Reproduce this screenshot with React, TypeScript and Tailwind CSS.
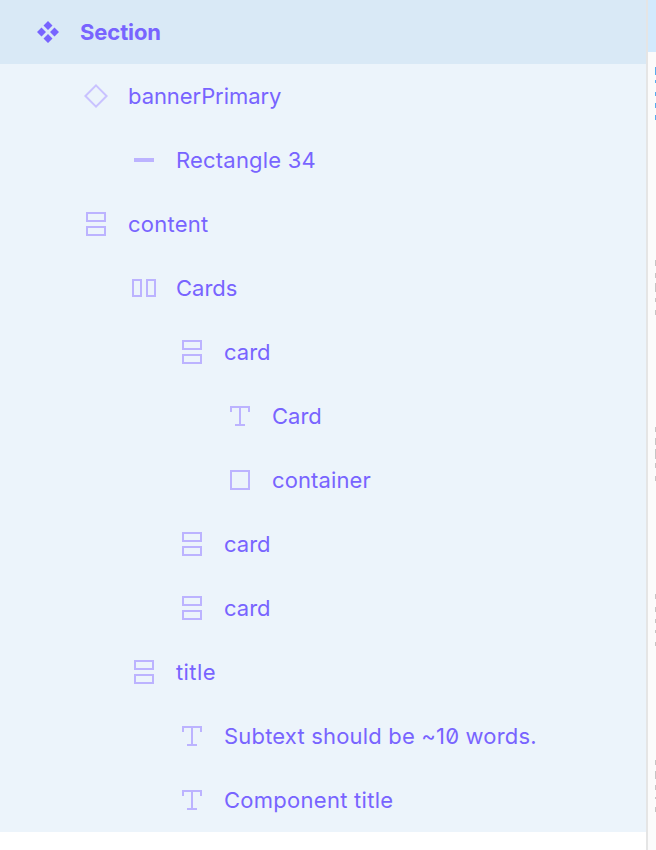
const FONT = "font-['Inter','Liberation_Sans',sans-serif]";

type IconKind = 'component' | 'instance' | 'line' | 'vstack' | 'hstack' | 'text' | 'rect';

function Icon({ kind }: { kind: IconKind }) {
  const stroke = '#bcb3ff';
  return (
    <svg width="24" height="24" viewBox="0 0 24 24" fill="none" className="shrink-0">
      {kind === 'component' && (
        <path
          fill="#7864ff"
          d="M12 1l4.5 4.5L12 10 7.5 5.5zM12 14l4.5 4.5L12 23l-4.5-4.5zM5.5 7.5L10 12l-4.5 4.5L1 12zM18.5 7.5L23 12l-4.5 4.5L14 12z"
        />
      )}
      {kind === 'instance' && (
        <path d="M12 1.4L22.6 12 12 22.6 1.4 12z" stroke="#c9c2ff" strokeWidth="2" />
      )}
      {kind === 'line' && <rect x="2" y="10" width="20" height="4" fill={stroke} />}
      {kind === 'vstack' && (
        <>
          <rect x="3" y="1" width="18" height="8" stroke={stroke} strokeWidth="2" />
          <rect x="3" y="15" width="18" height="8" stroke={stroke} strokeWidth="2" />
        </>
      )}
      {kind === 'hstack' && (
        <>
          <rect x="1" y="4" width="8" height="16" stroke={stroke} strokeWidth="2" />
          <rect x="15" y="4" width="8" height="16" stroke={stroke} strokeWidth="2" />
        </>
      )}
      {kind === 'text' && (
        <path d="M3 8V3h18v5M12 3v18M7 21h10" stroke={stroke} strokeWidth="2" />
      )}
      {kind === 'rect' && (
        <rect x="3" y="3" width="18" height="18" stroke={stroke} strokeWidth="2" />
      )}
    </svg>
  );
}

const rows: { label: string; kind: IconKind; pad: string; track: string }[] = [
  { label: 'bannerPrimary', kind: 'instance', pad: 'pl-[84px]', track: 'tracking-[-0.06px]' },
  { label: 'Rectangle 34', kind: 'line', pad: 'pl-[132px]', track: 'tracking-[0.2px]' },
  { label: 'content', kind: 'vstack', pad: 'pl-[84px]', track: 'tracking-[0.25px]' },
  { label: 'Cards', kind: 'hstack', pad: 'pl-[132px]', track: 'tracking-normal' },
  { label: 'card', kind: 'vstack', pad: 'pl-[180px]', track: 'tracking-normal' },
  { label: 'Card', kind: 'text', pad: 'pl-[228px]', track: 'tracking-normal' },
  { label: 'container', kind: 'rect', pad: 'pl-[228px]', track: 'tracking-[0.12px]' },
  { label: 'card', kind: 'vstack', pad: 'pl-[180px]', track: 'tracking-normal' },
  { label: 'card', kind: 'vstack', pad: 'pl-[180px]', track: 'tracking-normal' },
  { label: 'title', kind: 'vstack', pad: 'pl-[132px]', track: 'tracking-[0.4px]' },
  { label: 'Subtext should be ~10 words.', kind: 'text', pad: 'pl-[180px]', track: 'tracking-[0.18px]' },
  { label: 'Component title', kind: 'text', pad: 'pl-[180px]', track: 'tracking-[0.27px]' },
];

// Clipped text from the neighbouring panel: [top, bottom, colour]
const BLUE = '#56aeee';
const GREY = '#c6c6c6';
const specks: [number, number, string][] = [
  [67, 75, BLUE], [80, 83, BLUE], [92, 96, BLUE], [103, 108, BLUE], [115, 120, BLUE],
  [260, 266, GREY], [273, 278, GREY], [283, 292, GREY], [298, 302, GREY], [310, 315, GREY],
  [427, 432, GREY], [438, 445, GREY], [449, 459, GREY], [463, 468, GREY], [476, 481, GREY],
  [594, 599, GREY], [607, 612, GREY], [619, 623, GREY], [630, 633, GREY], [642, 646, GREY],
  [760, 765, GREY], [771, 779, GREY], [785, 790, GREY], [797, 799, GREY], [807, 812, GREY],
];

export default function App() {
  return (
    <div className={`flex h-[850px] w-[656px] overflow-hidden bg-white ${FONT}`}>
      <div className="w-[646px] shrink-0">
        <div className="flex h-16 items-center gap-5 bg-[#d9e9f6] pl-9 text-[22px] font-bold tracking-[-0.1px] text-[#7864ff]">
          <Icon kind="component" />
          <span>Section</span>
        </div>
        <div className="bg-[#ecf4fb]">
          {rows.map((r, i) => (
            <div
              key={i}
              className={`flex h-16 items-center gap-5 text-[22px] font-normal text-[#7864ff] slashed-zero ${r.pad} ${r.track}`}
            >
              <Icon kind={r.kind} />
              <span>{r.label}</span>
            </div>
          ))}
        </div>
      </div>
      <div className="w-0.5 shrink-0 bg-[#e5e5e5]" />
      <div className="flex-1 bg-[#fbfbfb]">
        <div className="h-[52px] bg-[#d3eafd]" />
        <div className="flex flex-col items-end">
          {specks.map(([top, bottom, color], i) => (
            <div
              key={i}
              className="w-px"
              style={{
                marginTop: top - (i === 0 ? 52 : specks[i - 1][1]),
                height: bottom - top,
                backgroundColor: color,
              }}
            />
          ))}
        </div>
      </div>
    </div>
  );
}
